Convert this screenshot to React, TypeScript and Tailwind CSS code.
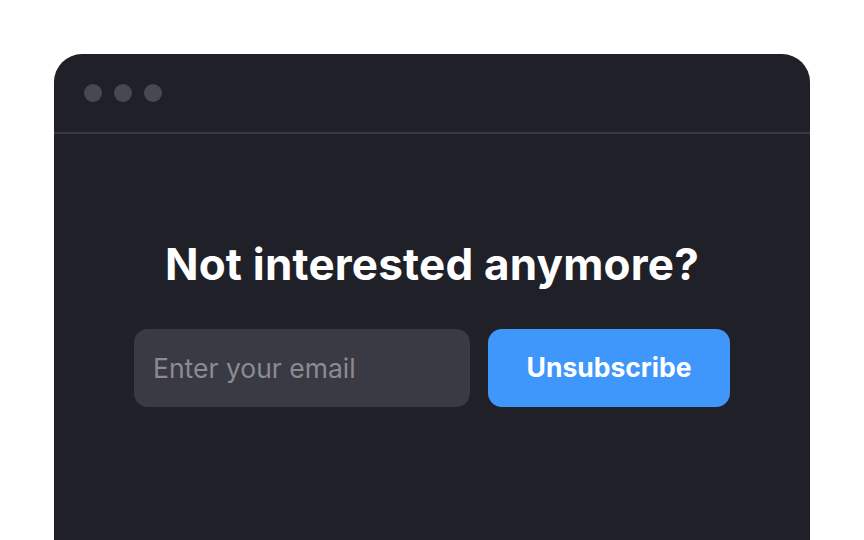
export default function App() {
  return (
    <div className="h-[540px] w-[864px] overflow-hidden bg-white pt-[54px] pl-[54px]" style={{ fontFamily: 'Inter, "Noto Sans", sans-serif' }}>
      <div className="h-[520px] w-[756px] rounded-t-[28px] bg-[#1f2028]">
        <div className="flex h-[78px] items-center gap-[12px] pl-[30px]">
          <span className="h-[18px] w-[18px] rounded-full bg-[#484851]" />
          <span className="h-[18px] w-[18px] rounded-full bg-[#484851]" />
          <span className="h-[18px] w-[18px] rounded-full bg-[#484851]" />
        </div>
        <div className="h-[2px] bg-[#383941]" />
        <div className="flex flex-col items-center pt-[104px]">
          <h1 className="text-[44px] leading-[52px] font-bold tracking-[0.2px] text-white">Not interested anymore?</h1>
          <div className="mt-[39px] flex gap-[18px]">
            <input
              type="email"
              placeholder="Enter your email"
              className="h-[78px] w-[336px] rounded-[14px] bg-[#393a43] px-[19px] text-[26.5px] text-white outline-none placeholder:text-[#8b8b92]"
            />
            <button className="h-[78px] w-[242px] rounded-[14px] bg-[#3f97fc] text-[26.5px] font-bold text-white">
              Unsubscribe
            </button>
          </div>
        </div>
      </div>
    </div>
  );
}
